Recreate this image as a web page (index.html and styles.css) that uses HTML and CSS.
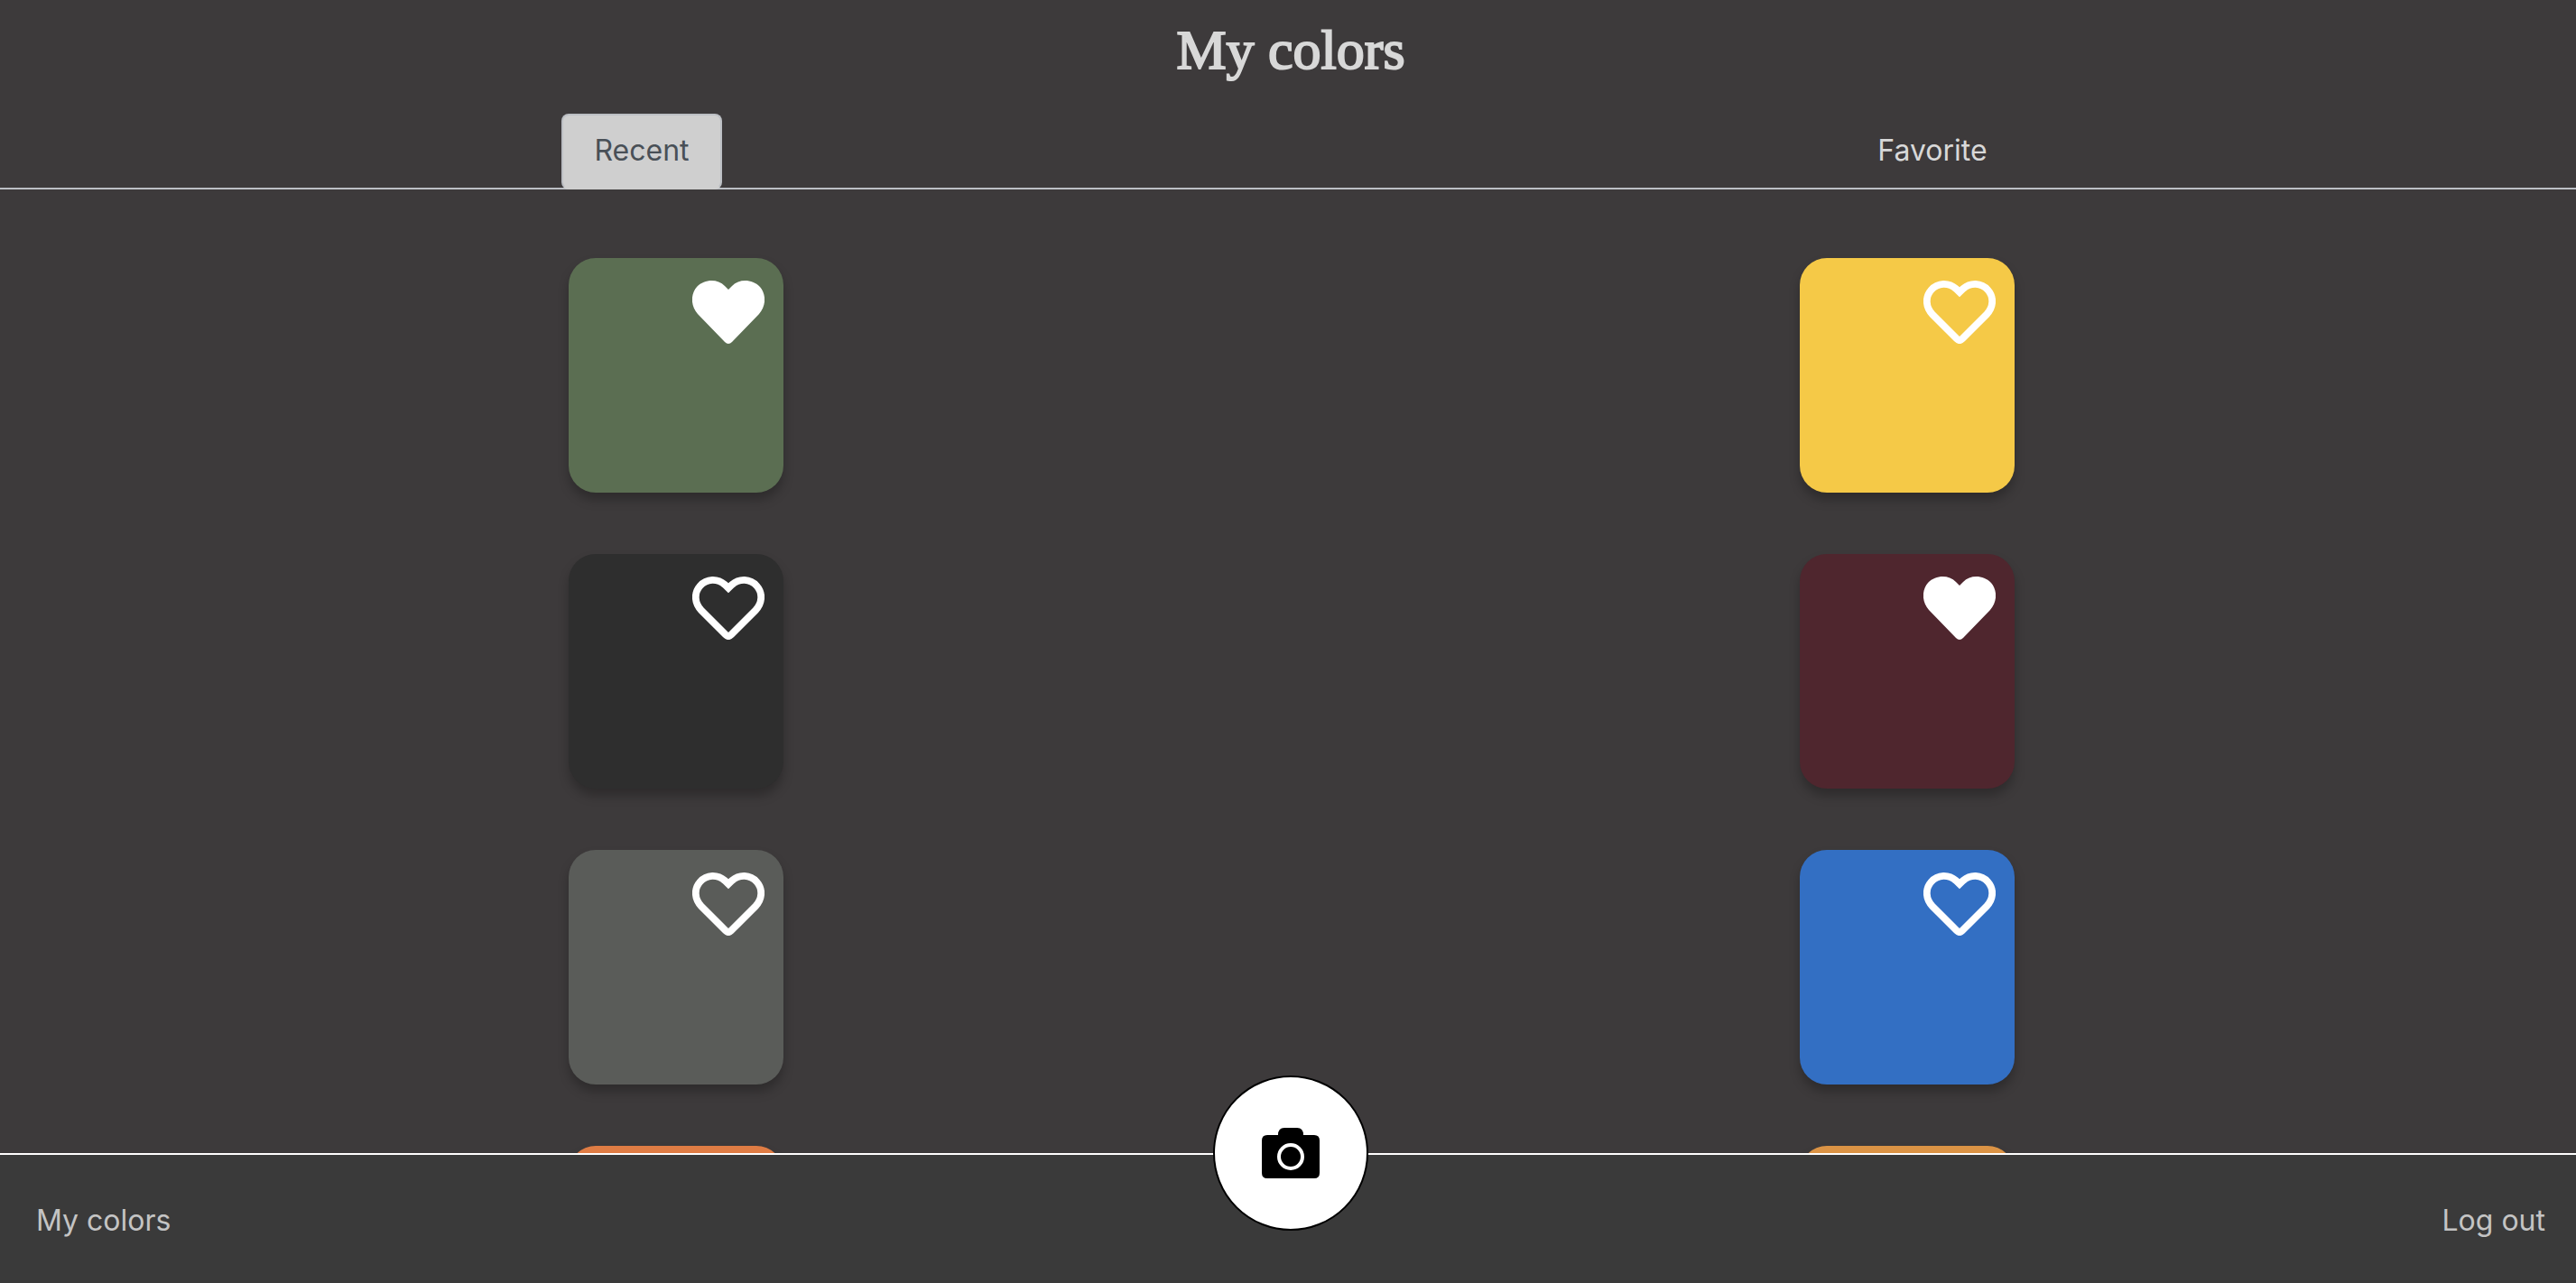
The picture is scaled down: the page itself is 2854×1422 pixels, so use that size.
FILE: index.html
```html
<!DOCTYPE html>
<html lang="en">
<head>
<meta charset="utf-8">
<meta name="viewport" content="width=device-width, initial-scale=1">
<title>My colors</title>
<link rel="stylesheet" href="styles.css">
</head>
<body>
<svg class="sprite" aria-hidden="true">
  <symbol id="heart-full" viewBox="0 0 80 70"><path d="M36 68 6 37C-2 28-2 15 5 7 14-2 28-2 36 6L40 10 44 6C52-2 66-2 75 7 82 15 82 28 74 37L44 68Q40 72 36 68Z" fill="currentColor"/></symbol>
  <symbol id="heart-line" viewBox="0 0 80 70"><path d="M37 64.500 10 37.500C2 29 2 18 8.500 10.500 16 2 28 2 36 9L40 12.800 44 9C52 2 64 2 71.500 10.500 78 18 78 29 70 37.500L43 64.500Q40 67.500 37 64.500Z" fill="none" stroke="currentColor" stroke-width="7.800"/></symbol>
</svg>
<header class="header">
  <h1 class="title">My colors</h1>
  <nav class="tabs">
    <button class="tab tab-active" type="button">Recent</button>
    <button class="tab" type="button">Favorite</button>
  </nav>
</header>
<main class="colors">
  <article class="card green"><button class="like" type="button" aria-label="Unlike"><svg><use href="#heart-full"/></svg></button></article>
  <article class="card yellow"><button class="like" type="button" aria-label="Like"><svg><use href="#heart-line"/></svg></button></article>
  <article class="card black"><button class="like" type="button" aria-label="Like"><svg><use href="#heart-line"/></svg></button></article>
  <article class="card wine"><button class="like" type="button" aria-label="Unlike"><svg><use href="#heart-full"/></svg></button></article>
  <article class="card gray"><button class="like" type="button" aria-label="Like"><svg><use href="#heart-line"/></svg></button></article>
  <article class="card blue"><button class="like" type="button" aria-label="Like"><svg><use href="#heart-line"/></svg></button></article>
  <article class="card orange"><button class="like" type="button" aria-label="Like"><svg><use href="#heart-line"/></svg></button></article>
  <article class="card amber"><button class="like" type="button" aria-label="Like"><svg><use href="#heart-line"/></svg></button></article>
</main>
<footer class="footer">
  <a class="link" href="#colors">My colors</a>
  <button class="camera" type="button" aria-label="Take a photo">
    <svg viewBox="0 0 64 56"><path d="M6 8H18Q18 0 25 0H39Q46 0 46 8H58Q64 8 64 14V50Q64 56 58 56H6Q0 56 0 50V14Q0 8 6 8Z"/><circle cx="32" cy="32" r="13" fill="none" stroke="#fff" stroke-width="4"/></svg>
  </button>
  <a class="link" href="#logout">Log out</a>
</footer>
</body>
</html>
```
FILE: styles.css
```css
* { box-sizing: border-box; }

body {
  display: flex;
  flex-direction: column;
  height: 100vh;
  margin: 0;
  overflow: hidden;
  background: #3d3a3b;
  color: #d8d8d8;
  font: 32px/48px Inter, sans-serif;
}

button {
  padding: 0;
  border: 0;
  background: none;
  color: inherit;
  font: inherit;
  cursor: pointer;
}

.sprite {
  display: none;
}

.header {
  flex: none;
}

.title {
  margin: 0;
  padding: 15px 0 31px 6px;
  font: 400 62px/80px "Liberation Serif", serif;
  -webkit-text-stroke: 2px;
  text-align: center;
}

.tabs {
  display: grid;
  grid-template-columns: 1fr 1fr;
  gap: 8px;
  justify-items: center;
  height: 84px;
  padding-right: 2px;
  border-bottom: 2px solid #bcbfc4;
}

.tab {
  width: 178px;
  height: 84px;
  padding-bottom: 2px;
  border: 2px solid transparent;
  border-radius: 8px;
}

.tab-active {
  border-color: #bcbfc4;
  border-bottom-color: #cfcfcf;
  background: #cfcfcf;
  color: #495057;
}

.colors {
  display: grid;
  flex: 1;
  grid-template-columns: 1fr 1fr;
  grid-auto-rows: 260px;
  gap: 68px 0;
  justify-items: center;
  min-height: 0;
  padding: 76px 59px 0 67px;
  overflow: hidden;
}

.card {
  display: flex;
  align-items: flex-start;
  justify-content: flex-end;
  width: 238px;
  padding: 25px 21px;
  border-radius: 30px;
  box-shadow: 0 8px 12px #00000040;
}

.green { background: #5b6e52; }
.yellow { background: #f5c947; }
.black { background: #2e2e2e; }
.wine { background: #4f262e; }
.gray { background: #5a5c59; }
.blue { background: #336fc3; }
.orange { background: #df7c44; }
.amber { background: #db9345; }

.like {
  color: #fff;
}

.like svg {
  display: block;
  width: 80px;
  height: 70px;
}

.footer {
  display: flex;
  position: relative;
  flex: none;
  align-items: center;
  justify-content: space-between;
  height: 144px;
  padding: 4px 34px 0 40px;
  border-top: 2px solid #fff;
  background: #3a3a3a;
}

.link {
  color: #c4c4c4;
  text-decoration: none;
}

.camera {
  display: grid;
  place-items: center;
  position: absolute;
  top: -88px;
  left: calc(50% - 83px);
  width: 172px;
  height: 172px;
  border: 2px solid #000;
  border-radius: 50%;
  background: #fff;
}

.camera svg {
  width: 64px;
  height: 56px;
}
```
